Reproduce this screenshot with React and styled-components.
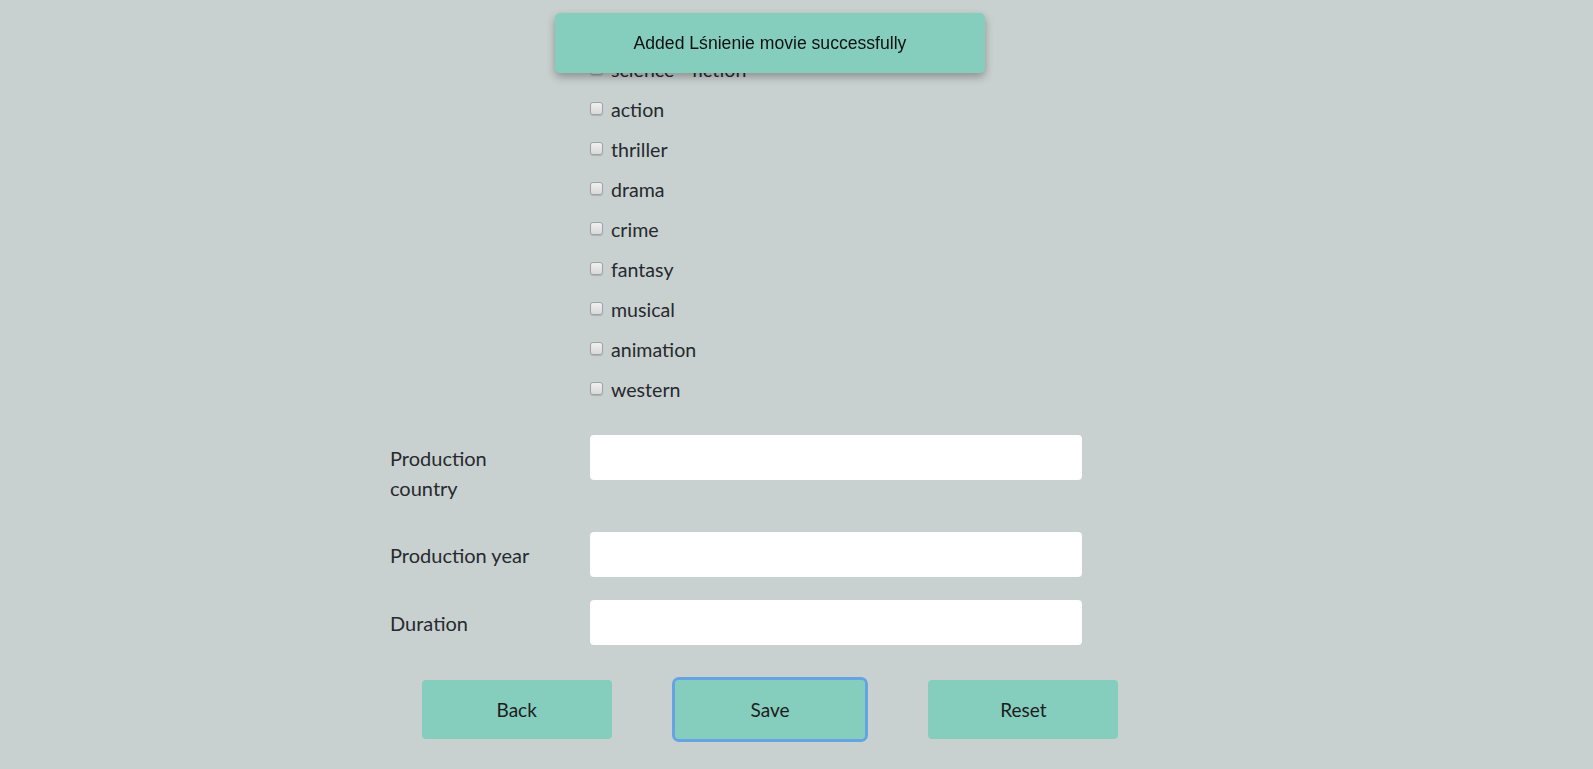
import styled, { createGlobalStyle } from "styled-components";

const GlobalStyle = createGlobalStyle`
body {
  margin: 0;
  background-color: #c9d0d0;
  font-family: Lato, "Open Sans", sans-serif;
  color: #262a2e;
  overflow: hidden;
}
`;

const Page = styled.div`
height: 769px;
padding-right: 53px;
overflow: hidden;
`;

const Form = styled.form`
width: 760px;
margin: -31px auto 0;
`;

const Row = styled.div`
display: grid;
grid-template-columns: 200px 492px;
align-items: start;
margin-top: ${props => props.$gap || 0}px;
`;

const Label = styled.label`
font-size: 20px;
line-height: 30px;
padding: ${props => props.$tight ? "5px 0 0" : "8px 0 6px"};
`;

const CheckList = styled.div`
display: flex;
flex-direction: column;
`;

const CheckRow = styled.label`
height: 40px;
display: flex;
align-items: center;
font-size: 19.6px;
`;

const Check = styled.input`
appearance: none;
width: 13px;
height: 13px;
margin: -2px 8px 0 0;
border: 1px solid #9fa3a3;
border-radius: 3px;
background: linear-gradient(#f0f0f0, #d9d9d9);
box-shadow: 0 1px 1px rgba(0, 0, 0, 0.15);
box-sizing: border-box;
`;

const Input = styled.input`
height: 45px;
box-sizing: border-box;
border: none;
border-radius: 4px;
background: #fff;
padding: 0 12px;
font-size: 18px;
`;

const Buttons = styled.div`
display: flex;
justify-content: space-around;
margin-top: 35px;
`;

const Button = styled.button`
width: 190px;
height: 59px;
border: none;
border-radius: 4px;
background-color: #85cdbd;
color: #1d1d1d;
font-family: Lato, sans-serif;
font-size: 19px;
outline: ${props => props.$focused ? "3px solid #66a3e4" : "none"};
outline-offset: 0;
cursor: pointer;
`;

const Toast = styled.div`
position: fixed;
top: 13px;
left: calc(50% - 26.5px);
transform: translateX(-50%);
width: 430px;
height: 60px;
display: flex;
align-items: center;
justify-content: center;
background-color: #85cdbd;
border-radius: 5px;
box-shadow: 0 4px 8px rgba(0, 0, 0, 0.3);
font-family: "Liberation Sans", Arial, sans-serif;
font-size: 17.6px;
color: #111;
`;

const genres = [
  "horror",
  "science - fiction",
  "action",
  "thriller",
  "drama",
  "crime",
  "fantasy",
  "musical",
  "animation",
  "western",
];

export default function App() {
  return (
    <Page>
      <GlobalStyle />
      <Form onSubmit={e => e.preventDefault()}>
        <Row>
          <Label $tight>Movie type</Label>
          <CheckList>
            <CheckRow><Check type="checkbox" />comedy</CheckRow>
            {genres.map(g => (
              <CheckRow key={g}><Check type="checkbox" />{g}</CheckRow>
            ))}
          </CheckList>
        </Row>
        <Row $gap={26}>
          <Label>Production<br />country</Label>
          <Input />
        </Row>
        <Row $gap={23}>
          <Label>Production year</Label>
          <Input />
        </Row>
        <Row $gap={23}>
          <Label>Duration</Label>
          <Input />
        </Row>
        <Buttons>
          <Button type="button">Back</Button>
          <Button type="submit" $focused>Save</Button>
          <Button type="reset">Reset</Button>
        </Buttons>
      </Form>
      <Toast>Added Lśnienie movie successfully</Toast>
    </Page>
  );
}
